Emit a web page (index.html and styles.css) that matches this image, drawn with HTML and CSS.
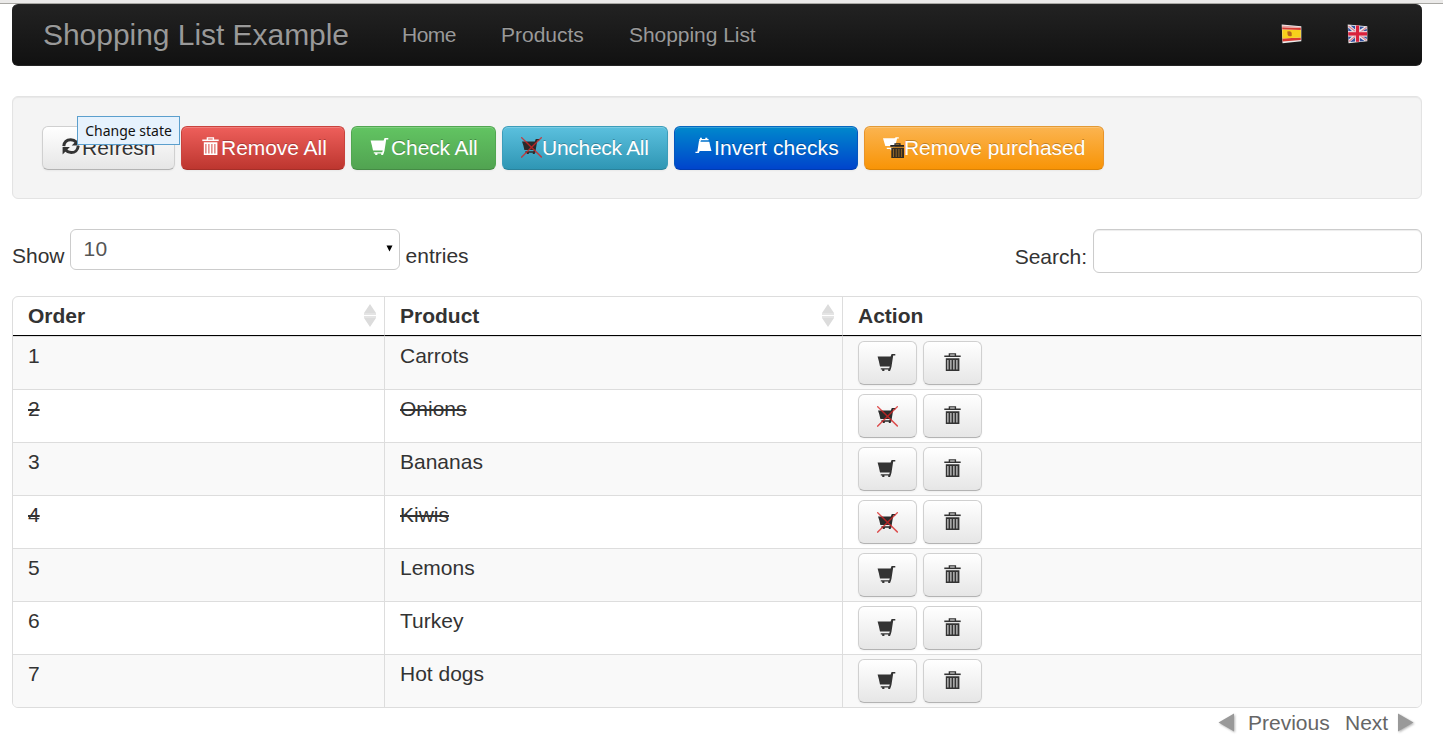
FILE: index.html
```html
<!DOCTYPE html>
<html lang="en">
<head>
<meta charset="utf-8">
<title>Shopping List Example</title>
<link rel="stylesheet" href="styles.css">
</head>
<body>
<svg class="defs" width="0" height="0">
  <defs>
    <symbol id="cart" viewBox="0 0 21 21">
      <path fill="currentColor" d="M.6 3.4h13l1-2.4h3.7v1.6h-2.1L14.4 14.2l-.6 1.2h.2v1.2h-.8v1.3h-2v-1.3H7.4v1.3H5.2v-1.3H3.8v-1.4h8.4l.6-1.6H3L1.8 8z"/>
    </symbol>
    <symbol id="trash" viewBox="0 0 21 21">
      <path fill="none" stroke="currentColor" stroke-width="1.4" d="M7.4 3V.9h6V3"/>
      <path fill="currentColor" d="M2.3 2.5h16.4v1.6H2.3z"/>
      <path fill="currentColor" fill-rule="evenodd" d="M3.8 5.3h13.6V18H3.8zM5.4 7v9.5h1V7zm3 0v9.5h1V7zm3 0v9.5h1V7zm3 0v9.5h1V7z"/>
    </symbol>
    <symbol id="refresh" viewBox="0 0 21 21">
      <path fill="none" stroke="currentColor" stroke-width="3" d="M2.8 9.2C3.2 5.2 6 2.8 9.8 2.8c2.4 0 4.1.9 5.5 2.5M17.2 9c-.3 4.2-3.3 6.6-7 6.6-2.3 0-4-.8-5.6-2.6"/>
      <path fill="currentColor" d="M18.2 1v7.4h-7.5zM1.6 17.4v-7.3h7.3z"/>
    </symbol>
    <symbol id="uncart" viewBox="0 0 21 21">
      <path fill="#2b2b2b" d="M1 4.4h12.8l1-2.4h3.5v1.5h-2L14.6 13.4l-.6 1.2h.4v1.1h-.6v1.4h-2v-1.4H7.8v1.4h-2v-1.4H4.4v-1.4h8l.5-1.2H3.4L2.2 8z"/>
      <path fill="none" stroke="#d82424" stroke-opacity=".8" stroke-width="1.4" d="M.2.3 20.8 20.4M20.8.3.2 20.6"/>
    </symbol>
  </defs>
</svg>
<div class="topline"></div>
<main class="page">
  <nav class="navbar">
    <a class="brand">Shopping List Example</a>
    <a class="link home">Home</a>
    <a class="link products">Products</a>
    <a class="link">Shopping List</a>
    <div class="flags">
      <svg width="21" height="20" viewBox="0 0 21 20">
        <path fill="#eee" d="M.7.5 20.3 2.3v15L1.5 19.2z"/>
        <path fill="#d83a32" d="M1.2 3.2 19.8 4v2L1.2 5.6zM1.5 14.5l18.3-1v2.4L1.6 17.4z"/>
        <path fill="#f7cf1b" d="M1.2 5.8 19.8 6v7.5l-18.4 1z"/>
        <path fill="#b5651d" d="M6.3 7.5q4-1 4.4 1.5v3q-3 1-4-1z"/>
        <path fill="#e8a2a0" d="M1.2 1.6 19.8 3v1l-18.6-.8z"/>
      </svg>
      <svg width="21" height="20" viewBox="0 0 21 20">
        <path fill="#eee" d="M.7.5 20.3 2.3v15L1.5 19.2z"/>
        <path fill="#3553a0" d="M3.5 1.6 8 2v3.6zM12.5 2.4l5 .4-5 3.2zM1.2 3.5 5 7H1.2zm18.6 1V7h-4zM1.3 12.6H5l-3.6 3.2zM16 12.6h3.8v2.6zM8 13.5v4l-5 .6zM12.5 13.5l5 3.4-5 .5z"/>
        <path fill="none" stroke="#d98090" stroke-width="1.2" d="M1.5 2l18 14.5M1.8 17.5 19.6 3.2"/>
        <path fill="#e9c3cc" d="M8.3 1.8h4.4v16H8.3zM1.2 7.2h18.8v5.4H1.3z"/>
        <path fill="#d9203c" d="M9 1.6h3v16.2H9zM1.2 8.2h18.9v3.3H1.3z"/>
      </svg>
    </div>
  </nav>

  <section class="well">
    <a class="btn refresh">
      <svg class="icon"><use href="#refresh"/></svg>Refresh
      <span class="tip">Change state</span>
    </a>
    <a class="btn danger"><svg class="icon"><use href="#trash"/></svg>Remove All</a>
    <a class="btn success"><svg class="icon"><use href="#cart"/></svg>Check All</a>
    <a class="btn info"><svg class="icon"><use href="#uncart"/></svg>Uncheck All</a>
    <a class="btn primary"><svg class="icon flipped"><use href="#cart"/></svg>Invert checks</a>
    <a class="btn warning"><svg class="icon" viewBox="0 0 21 21">
      <path fill="#fff" d="M0 1.3h11.5L12.8.3h3v1.3h-1.7L12 10H9.5v3.2h-2V12H3.8v-1.2h6L10 9H2.3z"/>
      <path fill="none" stroke="#222" stroke-width="1.2" d="M12 8V6.8h5V8"/>
      <path fill="#222" d="M7.3 8h14.2v1.8H7.3z"/>
      <path fill="#332b20" d="M8.3 10.7h13V21h-13z"/>
      <path stroke="#a97425" stroke-width=".8" d="M10.5 12v8M13.2 12v8M15.9 12v8M18.6 12v8"/>
    </svg>Remove purchased</a>
  </section>

  <section class="controls">
    <label class="length">Show <span class="select">10<svg width="7" height="7" viewBox="0 0 7 7"><path d="M.5.5h6l-3 6z"/></svg></span> entries</label>
    <label class="filter">Search: <input type="text"></label>
  </section>

  <section class="table">
    <div class="row head">
      <div>Order<svg class="sort" viewBox="0 0 14 23"><path d="M7 0l6 9H1zM1 9.3h12v1.5H1zM1 12.2h12v1.5H1zM1 14h12l-6 9z"/></svg></div>
      <div>Product<svg class="sort" viewBox="0 0 14 23"><path d="M7 0l6 9H1zM1 9.3h12v1.5H1zM1 12.2h12v1.5H1zM1 14h12l-6 9z"/></svg></div>
      <div>Action</div>
    </div>
    <div class="row"><div>1</div><div>Carrots</div><div class="actions"><a class="btn"><svg class="icon"><use href="#cart"/></svg></a><a class="btn"><svg class="icon"><use href="#trash"/></svg></a></div></div>
    <div class="row done"><div>2</div><div>Onions</div><div class="actions"><a class="btn"><svg class="icon"><use href="#uncart"/></svg></a><a class="btn"><svg class="icon"><use href="#trash"/></svg></a></div></div>
    <div class="row"><div>3</div><div>Bananas</div><div class="actions"><a class="btn"><svg class="icon"><use href="#cart"/></svg></a><a class="btn"><svg class="icon"><use href="#trash"/></svg></a></div></div>
    <div class="row done"><div>4</div><div>Kiwis</div><div class="actions"><a class="btn"><svg class="icon"><use href="#uncart"/></svg></a><a class="btn"><svg class="icon"><use href="#trash"/></svg></a></div></div>
    <div class="row"><div>5</div><div>Lemons</div><div class="actions"><a class="btn"><svg class="icon"><use href="#cart"/></svg></a><a class="btn"><svg class="icon"><use href="#trash"/></svg></a></div></div>
    <div class="row"><div>6</div><div>Turkey</div><div class="actions"><a class="btn"><svg class="icon"><use href="#cart"/></svg></a><a class="btn"><svg class="icon"><use href="#trash"/></svg></a></div></div>
    <div class="row"><div>7</div><div>Hot dogs</div><div class="actions"><a class="btn"><svg class="icon"><use href="#cart"/></svg></a><a class="btn"><svg class="icon"><use href="#trash"/></svg></a></div></div>
  </section>

  <footer class="pager">
    <svg class="arrow" viewBox="0 0 20 22"><path d="M17 1.5v18L1.5 10.5z"/></svg>
    <a class="prev">Previous</a>
    <a class="next">Next</a>
    <svg class="arrow" viewBox="0 0 20 22"><path d="M2 1.5v18l15.5-9z"/></svg>
  </footer>
</main>
</body>
</html>
```

FILE: styles.css
```css
* { box-sizing: border-box; }
body {
  margin: 0;
  height: 741px;
  overflow: hidden;
  background: #fff;
  color: #333;
  font: 21px/30px "Liberation Sans", Arial, sans-serif;
}
.defs { display: block; }
.topline { height: 4px; background: #ebeae9; border-bottom: 1px solid #a9a8a4; }
.page { width: 1410px; margin-left: 12px; }

.navbar {
  display: flex;
  align-items: center;
  height: 62px;
  padding: 0 54px 0 31px;
  border: 1px solid #252525;
  border-left-width: 0;
  border-right-width: 0;
  border-radius: 6px;
  background: linear-gradient(#222, #111);
  color: #999;
  text-shadow: 0 -1px 0 rgba(0, 0, 0, .25);
}
.brand { width: 359px; font-size: 30px; letter-spacing: -.04px; white-space: nowrap; }
.link { white-space: nowrap; letter-spacing: -.05px; }
.home { width: 99px; letter-spacing: -.5px; }
.products { width: 128px; letter-spacing: 0; }
.flags { display: flex; gap: 45px; margin: -2px 0 0 auto; }

.well {
  display: flex;
  gap: 6px;
  height: 103px;
  margin-top: 30px;
  padding: 29px;
  border: 1px solid #e3e3e3;
  border-radius: 6px;
  background: #f4f4f4;
  box-shadow: inset 0 1px 1px rgba(0, 0, 0, .05);
}
.btn {
  position: relative;
  display: flex;
  height: 44px;
  padding: 6px 18px;
  border: 1px solid #ccc;
  border-color: #d0d0d0 #d0d0d0 #b3b3b3;
  border-radius: 6px;
  background: linear-gradient(#fff, #e6e6e6);
  box-shadow: inset 0 1px 0 rgba(255, 255, 255, .2), 0 1px 2px rgba(0, 0, 0, .05);
  text-shadow: 0 1px 1px rgba(255, 255, 255, .75);
  white-space: nowrap;
}
.icon { display: block; flex: none; width: 21px; height: 21px; margin-top: 4px; }
.danger, .success, .info, .primary, .warning { color: #fff; text-shadow: 0 -1px 0 rgba(0, 0, 0, .25); }
.refresh { width: 133px; }
.danger { width: 164px; letter-spacing: -.04px; background: linear-gradient(#ee5f5b, #bd362f); border-color: #c9433d #c9433d #a52f29; }
.success { width: 145px; letter-spacing: -.1px; background: linear-gradient(#62c462, #51a351); border-color: #51a651 #51a651 #458b45; }
.info { width: 166px; letter-spacing: -.28px; background: linear-gradient(#5bc0de, #2f96b4); border-color: #3c9dba #3c9dba #2a829b; }
.primary { width: 184px; letter-spacing: .08px; background: linear-gradient(#08c, #04c); border-color: #0668c0 #0656bd #003cb1; }
.warning { width: 240px; letter-spacing: -.05px; background: linear-gradient(#fbb450, #f89406); border-color: #e39a35 #e8942a #d98207; }
.primary .flipped { transform: rotate(180deg); width: 19px; height: 21px; margin: 1px 2px 0 0; overflow: visible; }
.tip {
  position: absolute;
  left: 34px;
  top: -11px;
  width: 103px;
  height: 29px;
  border: 1px solid #5b9fcd;
  background: #e6f2fd;
  color: #111;
  font: 14px/28px "Noto Sans", sans-serif;
  text-align: center;
  text-shadow: none;
  z-index: 1;
}

.controls { display: flex; justify-content: space-between; height: 67px; margin-top: 30px; }
.length, .filter { display: flex; gap: 6px; line-height: 54px; }
.filter { line-height: 56px; }
.select {
  display: flex;
  align-items: center;
  justify-content: space-between;
  width: 330px;
  height: 41px;
  padding: 0 6px 2px 13px;
  margin-left: -1px;
  border: 1px solid #ccc;
  border-radius: 6px;
  color: #555;
  letter-spacing: .3px;
  line-height: 37px;
}
.filter input {
  width: 329px;
  height: 44px;
  border: 1px solid #ccc;
  border-radius: 6px;
  background: #fff;
  box-shadow: inset 0 1px 1px rgba(0, 0, 0, .075);
}

.table { height: 412px; border: 1px solid #ddd; border-radius: 6px; overflow: hidden; }
.row { display: grid; grid-template-columns: 371px 458px 1fr; height: 53px; border-top: 1px solid #ddd; }
.row > div { padding: 4px 15px; border-left: 1px solid #ddd; }
.row > div:first-child { border-left: 0; }
.row:nth-child(even) { background: #f9f9f9; }
.row.head { height: 39px; border-top: 0; font-weight: bold; }
.row.head > div { display: flex; justify-content: space-between; padding: 4px 7px 0 15px; border-bottom: 1px solid #000; }
.sort { width: 14px; height: 23px; margin-top: 3px; fill: #dcdcdc; }
.done { text-decoration: line-through; }
.row > .actions { display: flex; gap: 6px; padding-top: 4px; }
.actions .icon { margin-top: 5px; }

.pager { display: flex; color: #666; height: 30px; justify-content: flex-end; }
.arrow { width: 20px; height: 22px; margin-top: 4px; fill: #999; filter: drop-shadow(1px 1px 1px rgba(0, 0, 0, .3)); }
.prev { width: 97px; margin-left: 11px; }
.next { width: 51px; }
.pager .arrow:last-child { margin-right: 6px; }
```
